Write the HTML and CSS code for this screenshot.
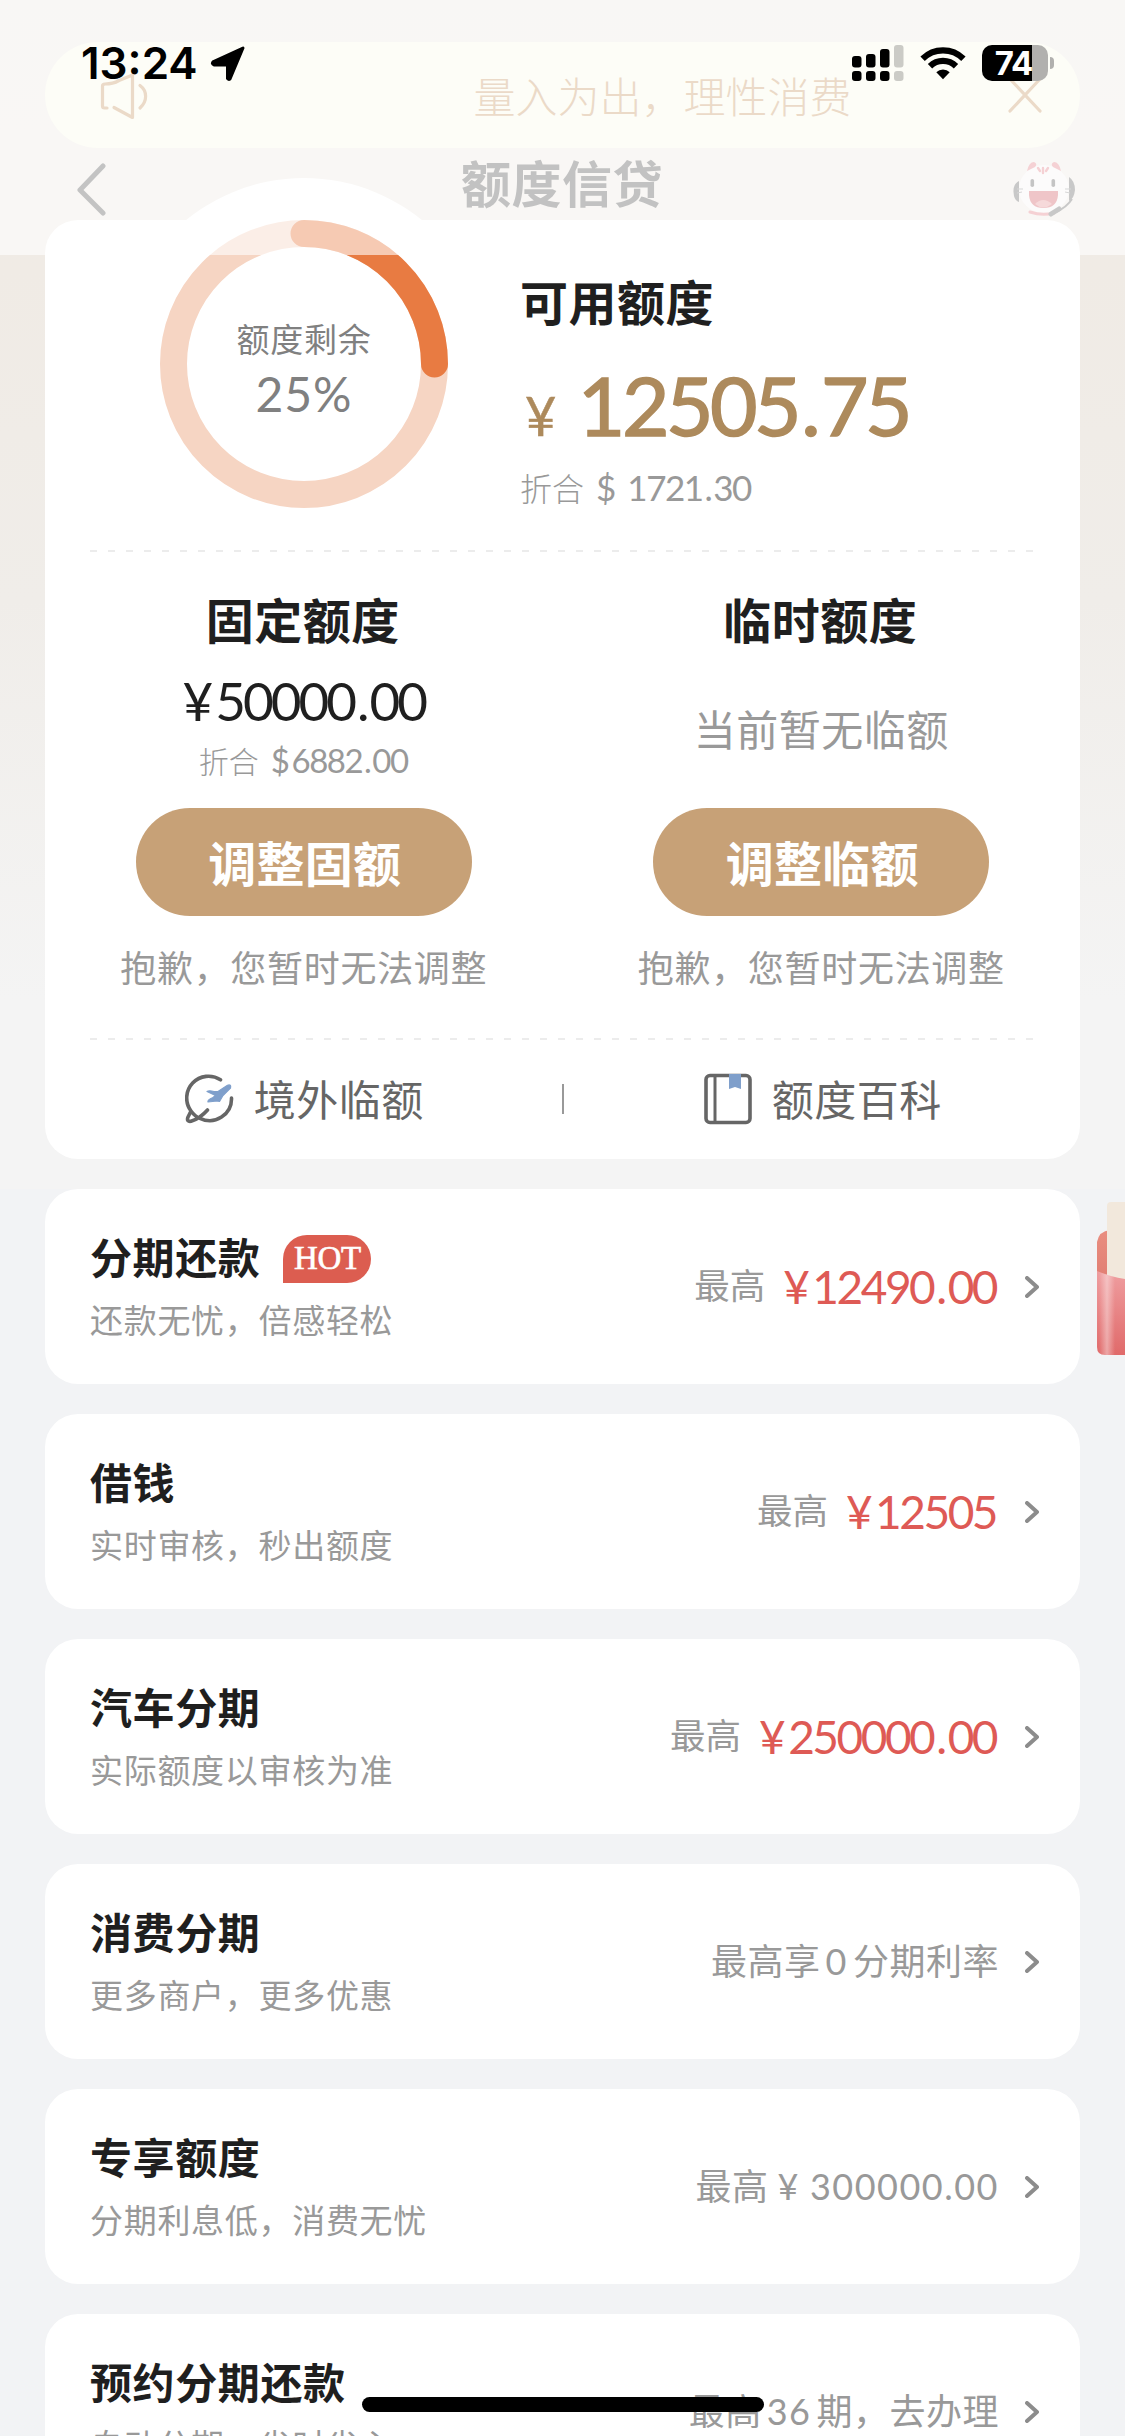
FILE: index.html
```html
<!DOCTYPE html>
<html lang="zh-CN">
<head>
<meta charset="utf-8">
<title>额度信贷</title>
<link rel="stylesheet" href="styles.css">
</head>
<body>
<div class="screen">
  <section class="hero">
    <div class="notice">
      <svg class="notice-speaker" width="50" height="48" viewBox="0 0 50 48" fill="none" stroke="#cda275" stroke-width="3.2" stroke-linecap="round" stroke-linejoin="round"><path d="M8 36H5.500Q3.500 36 3.500 34V14Q3.500 12 6 12Q14 12 20 8.500L33.500 3V45.500L15 35.500"/><path d="M41 13.500C48.500 19 48.500 29 41 36"/></svg>
      <p class="notice-text">量入为出，理性消费</p>
      <svg class="notice-close" width="36" height="36" viewBox="0 0 36 36" fill="none" stroke="#cda275" stroke-width="3.200" stroke-linecap="round"><path d="M3 2 33 34M33 2 3 34"/></svg>
    </div>
    <nav class="nav">
      <svg class="nav-back" width="32" height="54" viewBox="0 0 32 54" fill="none" stroke="#6a6a6a" stroke-width="5" stroke-linecap="round" stroke-linejoin="round"><path d="M27 4 4 28 27 51"/></svg>
      <h1 class="nav-title">额度信贷</h1>
      <svg class="nav-service" width="64" height="56" viewBox="0 0 64 56">
        <ellipse cx="32" cy="28" rx="25" ry="24" fill="#f8f5f5"/>
        <path d="M15 10Q17 1 22 1Q26 3 23 6ZM49 10Q47 1 42 1Q38 3 41 6Z" fill="#e58c93"/>
        <path d="M26 7 28 10M31 7V12M36 7 34 10" stroke="#e58c93" stroke-width="2.400" stroke-linecap="round"/>
        <path d="M7 20Q1 23 1.500 31Q2 40 7 41ZM57 16Q63 20 63 29Q62 38 57 40Z" fill="#777"/>
        <path d="M5 28H11M5 32 10 31M53 28H59M53 31 58 32" stroke="#999" stroke-width="1"/>
        <rect x="18.500" y="18" width="3.600" height="8" rx="1.800" fill="#6d6d6d"/><rect x="39.500" y="18" width="3.600" height="8" rx="1.800" fill="#6d6d6d"/>
        <path d="M17 30H46V34Q45 47 31.500 47T17 34Z" fill="#d66f75"/>
        <path d="M23 43Q31 35 40 43Q31 50 23 43Z" fill="#e9a0a3"/>
        <path d="M18 51Q30 55 42 52" stroke="#e58c93" stroke-width="3" fill="none" stroke-linecap="round"/>
        <path d="M60 38Q55 46 44 51" stroke="#777" stroke-width="2" fill="none"/><path d="M39 53 47 48" stroke="#777" stroke-width="5" stroke-linecap="round"/>
      </svg>
    </nav>

    <article class="quota">
      <div class="overview">
        <div class="ring">
          <svg class="ring-chart" width="288" height="288" viewBox="0 0 288 288" fill="none" stroke-width="27">
            <circle cx="144" cy="144" r="130.500" stroke="#f6d5c3"/>
            <path d="M144 13.500A130.500 130.500 0 0 1 274.500 144" stroke="#e87b42" stroke-linecap="round"/>
          </svg>
          <div class="ring-label">
            <span class="ring-name">额度剩余</span>
            <span class="ring-value">25%</span>
          </div>
        </div>
        <div class="available">
          <h2 class="heading">可用额度</h2>
          <p class="available-amount"><span class="available-sign">¥</span>12505<span class="dot">.</span>75</p>
          <p class="available-usd"><span class="thin">折合</span><span class="usd-sign">$</span><span class="usd-num">1721<span class="dot">.</span>30</span></p>
        </div>
      </div>

      <div class="split">
        <div class="split-col">
          <h2 class="heading">固定额度</h2>
          <p class="fixed-amount"><span class="fixed-sign">¥</span>50000<span class="dot">.</span>00</p>
          <p class="fixed-usd"><span class="thin">折合</span><span class="fixed-usd-num"><span class="fixed-dollar">$</span>6882<span class="dot">.</span>00</span></p>
          <button class="adjust">调整固额</button>
          <p class="hint">抱歉，您暂时无法调整</p>
        </div>
        <div class="split-col">
          <h2 class="heading">临时额度</h2>
          <p class="temp-empty">当前暂无临额</p>
          <button class="adjust">调整临额</button>
          <p class="hint">抱歉，您暂时无法调整</p>
        </div>
      </div>

      <div class="links">
        <a class="link">
          <svg class="link-globe" width="49" height="50" viewBox="0 0 49 50" fill="none" stroke-linecap="round" stroke-linejoin="round">
            <path d="M35.500 5.800A21.800 21.800 0 0 0 6 37L2.800 43.500Q1.500 48 6 47.300Q15 44.500 22.500 36M6 37Q10 42.500 15 44.300A21.800 21.800 0 0 0 46.500 24" stroke="#666" stroke-width="3.600"/>
            <path d="M22 17.500Q24 16 29 17.500L33 17.500 42.500 11.200Q46.500 10 45.500 14L38 21.500 34.500 27.500 32 27 23 28Q22 26 28 23.500L30.500 21.500Z" fill="#7f9fcb" stroke="#7f9fcb" stroke-width="1.200"/>
          </svg>
          <span>境外临额</span>
        </a>
        <i class="links-divider"></i>
        <a class="link">
          <svg class="link-book" width="48" height="52" viewBox="0 0 48 52">
            <rect x="2" y="2.500" width="44" height="47" rx="4" fill="none" stroke="#666" stroke-width="3.600"/>
            <path d="M11 3V49" stroke="#666" stroke-width="3"/>
            <path d="M25 1H37V16L31 14 25 16Z" fill="#7f9fcb"/>
          </svg>
          <span>额度百科</span>
        </a>
      </div>
    </article>
  </section>

  <main class="list">
    <a class="item">
      <div class="item-main">
        <h3 class="item-title">分期还款<span class="hot">HOT</span></h3>
        <p class="item-sub">还款无忧，倍感轻松</p>
      </div>
      <div class="item-side"><span class="upto">最高</span><span class="amount"><span class="yen">¥</span>12490<span class="dot">.</span>00</span><svg class="chevron" width="14" height="22" viewBox="0 0 14 22"><path d="M2 2 12 11 2 20"/></svg></div>
    </a>
    <a class="item">
      <div class="item-main">
        <h3 class="item-title">借钱</h3>
        <p class="item-sub">实时审核，秒出额度</p>
      </div>
      <div class="item-side"><span class="upto">最高</span><span class="amount"><span class="yen">¥</span>12505</span><svg class="chevron" width="14" height="22" viewBox="0 0 14 22"><path d="M2 2 12 11 2 20"/></svg></div>
    </a>
    <a class="item">
      <div class="item-main">
        <h3 class="item-title">汽车分期</h3>
        <p class="item-sub">实际额度以审核为准</p>
      </div>
      <div class="item-side"><span class="upto">最高</span><span class="amount"><span class="yen">¥</span>250000<span class="dot">.</span>00</span><svg class="chevron" width="14" height="22" viewBox="0 0 14 22"><path d="M2 2 12 11 2 20"/></svg></div>
    </a>
    <a class="item">
      <div class="item-main">
        <h3 class="item-title">消费分期</h3>
        <p class="item-sub">更多商户，更多优惠</p>
      </div>
      <div class="item-side"><span class="note">最高享<span class="num zero">0</span>分期利率</span><svg class="chevron" width="14" height="22" viewBox="0 0 14 22"><path d="M2 2 12 11 2 20"/></svg></div>
    </a>
    <a class="item">
      <div class="item-main">
        <h3 class="item-title">专享额度</h3>
        <p class="item-sub">分期利息低，消费无忧</p>
      </div>
      <div class="item-side"><span class="note">最高<span class="num sign">¥</span><span class="num">300000.00</span></span><svg class="chevron" width="14" height="22" viewBox="0 0 14 22"><path d="M2 2 12 11 2 20"/></svg></div>
    </a>
    <a class="item">
      <div class="item-main">
        <h3 class="item-title">预约分期还款</h3>
        <p class="item-sub">自动分期，省时省心</p>
      </div>
      <div class="item-side"><span class="note">最高<span class="num months">36</span>期，去办理</span><svg class="chevron" width="14" height="22" viewBox="0 0 14 22"><path d="M2 2 12 11 2 20"/></svg></div>
    </a>
  </main>

  <svg class="packet" width="28" height="154" viewBox="0 0 28 154">
    <defs>
      <linearGradient id="back" x1="0" y1="0" x2="0" y2="1"><stop offset="0" stop-color="#e98e80"/><stop offset="1" stop-color="#df7a70"/></linearGradient>
      <linearGradient id="front" x1="0" y1="0" x2="0" y2="1"><stop offset="0" stop-color="#ef9ea0"/><stop offset="1" stop-color="#e06a6a"/></linearGradient>
      <linearGradient id="shine" x1="0" y1="0" x2="1" y2="0"><stop offset="0" stop-color="#fff" stop-opacity="0"/><stop offset=".5" stop-color="#fff" stop-opacity=".4"/><stop offset="1" stop-color="#fff" stop-opacity="0"/></linearGradient>
    </defs>
    <path d="M0 40Q2 29 13 28H28V90H0Z" fill="url(#back)"/>
    <path d="M10 4Q10 0 14 0H28V84H10Z" fill="#f2e8dc"/>
    <path d="M0 69Q14 75 28 77V153H8Q0 153 0 145Z" fill="url(#front)"/>
    <path d="M2 70 18 75V153H2Z" fill="url(#shine)"/>
  </svg>

  <div class="veil"></div>

  <header class="status">
    <span class="status-time">13:24</span>
    <svg class="status-arrow" width="36" height="35" viewBox="0 0 36 35"><path d="M33 2 20 33Q18.500 34 17.500 32.500V19H4Q1 17.500 3.500 15.500Z" stroke="#000" stroke-width="3" stroke-linejoin="round"/></svg>
    <svg class="status-signal" width="52" height="36" viewBox="0 0 52 36">
      <rect x="0" y="11" width="9.500" height="11.500" rx="3"/><rect x="14" y="9" width="9.500" height="13.500" rx="3"/><rect x="28" y="4" width="9.500" height="18.500" rx="3"/><rect x="42" y="0" width="9.500" height="22.500" rx="3" fill="#cbcbc6"/>
      <rect x="0" y="26" width="9.500" height="10" rx="3"/><rect x="14" y="26" width="9.500" height="10" rx="3"/><rect x="28" y="26" width="9.500" height="10" rx="3"/><rect x="42" y="26" width="9.500" height="10" rx="3" fill="#cbcbc6"/>
    </svg>
    <svg class="status-wifi" width="46" height="34" viewBox="0 0 46 34" fill="none" stroke="#000" stroke-width="6.200">
      <path d="M2.600 12.800A29 29 0 0 1 43.400 12.800"/><path d="M10 20.300A18.500 18.500 0 0 1 36 20.300"/>
      <path d="M16.300 26.300A9.500 9.500 0 0 1 29.700 26.300L23 33.300Z" fill="#000" stroke="none"/>
    </svg>
    <div class="battery"><span>74</span></div>
    <i class="battery-cap"></i>
  </header>
  <div class="home-bar"></div>
</div>
</body>
</html>
```
FILE: styles.css
```css
* { box-sizing: border-box; margin: 0; padding: 0; }
body {
  width: 1125px;
  height: 2436px;
  overflow: hidden;
  background: #f2f3f5;
  color: #1f1f1f;
  font-family: "Noto Sans CJK SC", sans-serif;
}
.screen { position: relative; width: 1125px; height: 2436px; overflow: hidden; }
svg { display: block; flex: none; }

/* top section */
.hero {
  height: 1189px;
  padding: 42px 45px 0;
  background: linear-gradient(#eeebe7 0, #f0ebe5 270px, #f0ede9 600px, #f4f4f4 1000px);
}
.notice {
  display: flex;
  align-items: center;
  justify-content: space-between;
  height: 106px;
  padding: 0 37px 0 54px;
  border-radius: 53px;
  background: #fafaea;
}
.notice-text {
  padding-left: 169px;
  color: #cda275;
  font-size: 42px;
  font-weight: 300;
  line-height: 60px;
}
.notice-speaker { margin-top: 2px; }
.nav {
  display: flex;
  align-items: center;
  justify-content: space-between;
  height: 72px;
  padding: 0 4px 0 31px;
}
.nav-back, .nav-service { margin-top: 9px; }
.nav-title { padding-left: 4px; margin-top: -6px; color: #686868; font-size: 50px; font-weight: 700; line-height: 60px; letter-spacing: .5px; }

/* quota card */
.quota { height: 939px; border-radius: 33px; background: #fff; }
.overview { display: flex; height: 330px; padding-left: 115px; }
.ring { position: relative; width: 288px; height: 288px; }
.ring::before { content: ""; position: absolute; inset: -42px; border-radius: 50%; background: #fff; }
.ring-chart { position: relative; }
.ring-label {
  position: absolute;
  inset: 0;
  display: flex;
  flex-direction: column;
  align-items: center;
  padding-top: 95px;
  color: #808080;
}
.ring-name { font-size: 33px; line-height: 46px; letter-spacing: .7px; }
.ring-value { margin-top: 5px; font-family: Lato, sans-serif; font-size: 48px; line-height: 56px; letter-spacing: 1px; }
.available { position: relative; padding: 50px 0 0 72px; }
.heading { font-size: 48px; font-weight: 700; line-height: 60px; letter-spacing: .5px; }
.available-amount {
  margin-top: 24px;
  color: #ad8a5c;
  font-family: Lato, sans-serif;
  font-size: 82px;
  font-weight: 400;
  line-height: 100px;
  letter-spacing: -3.500px;
  -webkit-text-stroke: 1.500px #ad8a5c;
}
.available-amount .dot { margin: 0 4px 0 3px; }
.available-sign { margin: 0 25px 0 5px; font-size: 54px; -webkit-text-stroke-width: .5px; }
.available-usd { display: flex; align-items: baseline; margin-top: -4px; color: #999; line-height: 50px; font-size: 32px; }
.thin { font-weight: 300; }
.usd-sign, .usd-num, .fixed-usd-num { font-family: Lato, sans-serif; font-size: 35px; }
.usd-sign { margin: 0 11px 0 12px; }
.usd-num { letter-spacing: -1.500px; }
.dot { margin: 0 3px; }
.usd-num .dot, .fixed-usd-num .dot { margin: 0 2px; }

.split {
  display: grid;
  grid-template-columns: 1fr 1fr;
  height: 490px;
  background:
    repeating-linear-gradient(90deg, #ececec 0 7px, transparent 7px 18px) 45px 0 / 943px 2px no-repeat,
    repeating-linear-gradient(90deg, #ececec 0 7px, transparent 7px 18px) 45px 488px / 943px 2px no-repeat;
}
.split-col { display: flex; flex-direction: column; align-items: center; padding-top: 38px; }
.split-col .heading { margin-left: -2px; }
.fixed-amount { margin-top: 21px; font-family: Lato, sans-serif; font-size: 53px; line-height: 64px; letter-spacing: -3px; }
.fixed-sign { margin-right: 5px; }
.fixed-usd { display: flex; align-items: baseline; gap: 12px; margin: 5px 0 0 -1px; color: #999; font-size: 30px; line-height: 44px; }
.fixed-usd-num { font-size: 33px; letter-spacing: -1.500px; }
.fixed-dollar { margin-right: 3px; }
.temp-empty { margin: 48px 0 48px; color: #999; font-size: 42px; line-height: 64px; letter-spacing: .5px; }
.adjust {
  width: 336px;
  height: 108px;
  margin-top: 26px;
  padding: 0 0 3px 2px;
  border: 0;
  border-radius: 54px;
  background: #c7a177;
  color: #fff;
  font: 700 48px/60px "Noto Sans CJK SC", sans-serif;
  letter-spacing: .3px;
}
.temp-empty + .adjust { margin-top: 0; }
.hint { margin-top: 25px; color: #999; font-size: 36px; line-height: 50px; letter-spacing: .7px; }

.links { display: grid; grid-template-columns: 1fr 2px 1fr; align-items: center; height: 118px; }
.link { display: flex; align-items: center; justify-content: center; gap: 20px; padding-left: 2px; color: #666; font-size: 42px; line-height: 60px; letter-spacing: .5px; }
.link span { margin-top: -3px; }
.links-divider { height: 30px; background: #999; }

/* product list */
.list { display: flex; flex-direction: column; gap: 30px; padding: 0 45px; }
.item { display: flex; justify-content: space-between; flex: none; height: 195px; padding: 0 41px 0 45px; border-radius: 33px; background: #fff; }
.item-main { padding-top: 42px; }
.item-title { display: flex; align-items: center; gap: 23px; font-size: 42px; font-weight: 700; line-height: 50px; letter-spacing: .6px; }
.hot {
  width: 88px;
  height: 48px;
  margin-top: 5px;
  border-radius: 24px 24px 24px 0;
  background: #dc5d50;
  color: #fff;
  font: 400 33px/47px "Liberation Serif", serif;
  letter-spacing: -.3px;
  text-align: center;
  -webkit-text-stroke: .6px #fff;
}
.item-title:has(.hot) { height: 50px; }
.item-sub { margin-top: 16px; color: #999; font-size: 33px; line-height: 44px; letter-spacing: .7px; }
.item-side { display: flex; align-items: center; color: #999; font-size: 36px; line-height: 50px; }
.upto { margin: -5px 18px 0 0; font-size: 35.500px; }
.amount { color: #de5a55; font-family: Lato, sans-serif; font-size: 46px; letter-spacing: -2.500px; }
.yen { margin-right: 5px; }
.note { margin: -4px -3px 0 0; letter-spacing: .5px; }
.num { font-family: Lato, sans-serif; letter-spacing: 1.500px; }
.zero, .months { margin: 0 5px; }
.sign { margin: 0 10px 0 9px; }
.chevron { margin-left: 29px; fill: none; stroke: #8c8c8c; stroke-width: 4; stroke-linecap: round; stroke-linejoin: round; }

/* floating layers */
.packet { position: absolute; left: 1097px; top: 1202px; }
.veil { position: absolute; left: 0; top: 0; width: 1125px; height: 255px; background: rgba(255, 255, 255, .6); }
.status { position: absolute; left: 0; top: 45px; display: flex; align-items: center; width: 1125px; height: 36px; padding-left: 81px; }
.status-time { width: 129px; font-family: Inter, sans-serif; font-size: 44px; font-weight: 600; line-height: 36px; color: #000; }
.status-signal { margin-left: 606px; }
.status-wifi { margin-left: 16px; }
.battery {
  width: 66px;
  height: 36px;
  margin-left: 16px;
  border-radius: 10px;
  background: linear-gradient(90deg, #000 50px, #b1b0ae 50px);
  color: #fff;
  font: 700 33px/37px Inter, sans-serif;
  letter-spacing: -1px;
  padding-right: 3px;
  text-align: center;
}
.battery-cap { width: 4px; height: 12px; margin-left: 2px; border-radius: 0 4px 4px 0; background: #b1b0ae; }
.home-bar { position: absolute; left: 362px; top: 2397px; width: 402px; height: 15px; border-radius: 8px; background: #000; }
```
